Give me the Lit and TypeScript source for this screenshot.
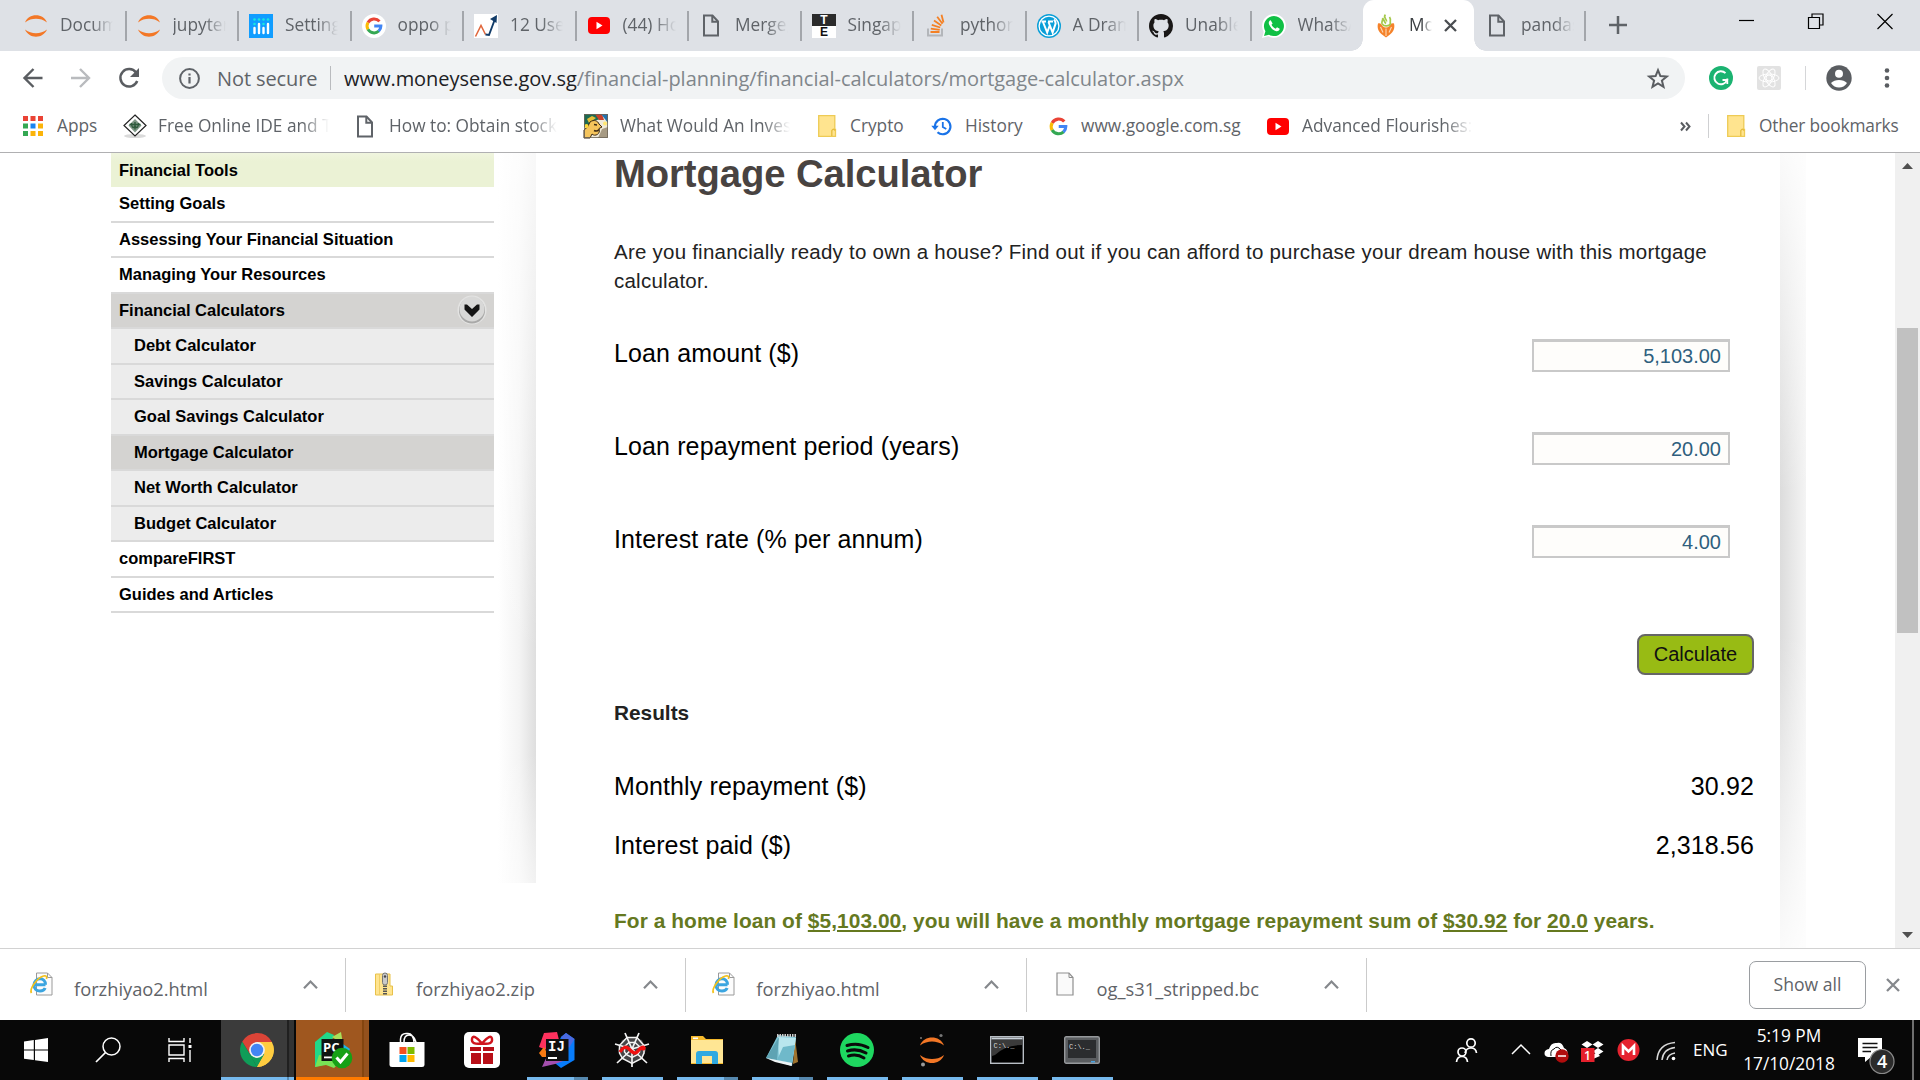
import { LitElement, html, css, svg } from "lit";
import { customElement } from "lit/decorators.js";
import { classMap } from "lit/directives/class-map.js";

const icon = (w: number, h: number, box: string, body: unknown) =>
  html`<svg class="ic" width=${w} height=${h} viewBox=${box} fill="none">${body}</svg>`;

const jupyter = () => icon(24, 24, "0 0 24 24", svg`
  <path d="M1 8.500C3 3.800 7.200 1.300 12 1.300S21 3.800 23 8.500C19.500 5.800 16 4.800 12 4.800S4.500 5.800 1 8.500Z" fill="#f37726"/>
  <path d="M1 15.500C3 20.200 7.200 22.700 12 22.700S21 20.200 23 15.500C19.500 18.200 16 19.200 12 19.200S4.500 18.200 1 15.500Z" fill="#f37726"/>`);

const plotly = () => icon(24, 24, "0 0 24 24", svg`
  <rect width="24" height="24" fill="#119dff"/>
  <g fill="#19e6e0"><circle cx="5.500" cy="5.500" r="1.300"/><circle cx="10" cy="5.500" r="1.300"/><circle cx="14.500" cy="5.500" r="1.300"/><circle cx="19" cy="5.500" r="1.300"/><circle cx="5.500" cy="10" r="1.300"/><circle cx="14.500" cy="10" r="1.300"/></g>
  <path d="M5.500 14v5M10 10v9M14.500 14v5M19 10v9" stroke="#fff" stroke-width="2.400" stroke-linecap="round"/>`);

const googleG = (s: number) => icon(s, s, "0 0 24 24", svg`
  <path d="M19.300 5.800A9.300 9.300 0 0 0 4 7.500" stroke="#ea4335" stroke-width="4"/>
  <path d="M4 7.400A9.300 9.300 0 0 0 4 16.600" stroke="#fbbc05" stroke-width="4"/>
  <path d="M4 16.500A9.300 9.300 0 0 0 18.400 18.700" stroke="#34a853" stroke-width="4"/>
  <path d="M18.200 18.900A9.300 9.300 0 0 0 21.200 12H12.300" stroke="#4285f4" stroke-width="4"/>`);

const googleTab = () => html`<span class="gtab">${googleG(18)}</span>`;

const chart = () => icon(24, 24, "0 0 24 24", svg`
  <rect width="24" height="24" fill="#fff"/>
  <path d="M1.500 22.500L7 11.500L11.500 20.500" stroke="#e0653a" stroke-width="1.500"/>
  <path d="M11.500 20.500L15 21L21 5" stroke="#123c69" stroke-width="1.900"/>
  <path d="M16 5L23 1L22.500 9Z" fill="#123c69"/>`);

const youtube = () => icon(22, 17, "0 0 22 17", svg`
  <rect width="22" height="17" rx="4" fill="#f00"/><path d="M8.500 4.800L14.500 8.500L8.500 12.200Z" fill="#fff"/>`);

const page = () => icon(18, 23, "0 0 18 23", svg`
  <path d="M2 1.500H10.500L16 7.500V21.500H2Z" stroke="#5f6368" stroke-width="2"/><path d="M10.300 1.500V7.700H16" stroke="#5f6368" stroke-width="2"/>`);

const te = () => icon(24, 24, "0 0 24 24", svg`
  <rect width="24" height="12" fill="#2b2b2b"/><rect y="12" width="24" height="12" fill="#fff"/>
  <text x="12" y="9.600" font-size="12" class="teText" fill="#fff">T</text>
  <text x="12" y="22.300" font-size="12" class="teText" fill="#111">E</text>`);

const stack = () => icon(20, 23, "0 0 20 23", svg`
  <path d="M2 14.500V21.500H16V14.500" stroke="#b3b6ba" stroke-width="2"/>
  <path d="M4.500 18H13.500M4.800 14.600L13.700 15.800M5.800 10.800L14.200 13.500M8 6.500L15.300 11.400M11.200 2.800L16.500 9.800M15.500 0.800L17.500 8.500" stroke="#f48024" stroke-width="1.800"/>`);

const wordpress = () => icon(24, 24, "0 0 24 24", svg`
  <circle cx="12" cy="12" r="12" fill="#0a9fd8"/><circle cx="12" cy="12" r="9.900" stroke="#fff" stroke-width="1.300"/>
  <path d="M4.500 7.600H9M11 7.600H16M6 8L10.200 18.500L12.700 11.500M11.500 8L15.600 18.500L18.600 9.500Q18.500 7 17 5.500" stroke="#fff" stroke-width="2"/>`);

const github = () => icon(24, 24, "0 0 16 16", svg`
  <path fill="#191717" d="M8 0C3.580 0 0 3.580 0 8c0 3.540 2.290 6.530 5.470 7.590.4.070.550-.170.550-.380 0-.190-.010-.820-.010-1.490-2.010.370-2.530-.490-2.690-.940-.090-.230-.480-.940-.820-1.130-.280-.150-.680-.520-.010-.530.630-.010 1.080.580 1.230.820.720 1.210 1.870.870 2.330.660.070-.520.280-.870.510-1.070-1.780-.2-3.640-.890-3.640-3.950 0-.870.310-1.590.820-2.150-.080-.2-.360-1.020.080-2.120 0 0 .670-.210 2.200.820.640-.180 1.320-.270 2-.270s1.360.090 2 .270c1.530-1.040 2.200-.820 2.200-.820.440 1.100.160 1.920.080 2.120.510.560.820 1.270.820 2.150 0 3.070-1.870 3.750-3.650 3.950.290.250.540.730.540 1.480 0 1.070-.010 1.930-.010 2.200 0 .210.150.460.550.380A8.010 8.010 0 0 0 16 8c0-4.420-3.580-8-8-8z"/>`);

const whatsapp = () => icon(24, 24, "0 0 24 24", svg`
  <path d="M0 24L1.700 17.900A11.900 11.900 0 1 1 6.200 22.300Z" fill="#fff"/>
  <path d="M2 22L3.400 17.300A10 10 0 1 1 7 20.800Z" fill="#10c045"/>
  <path d="M8.700 6.200C7 6.600 6.300 8.600 7.100 10.400C8.600 13.800 11 16.200 14.300 17.200C16 17.600 17.600 16.400 17.700 14.800L15 13.300L13.700 14.700C11.800 13.900 10.300 12.400 9.500 10.700L10.600 9.400Z" fill="#fff"/>`);

const moneysense = () => icon(18, 24, "0 0 18 24", svg`
  <path d="M1 9.500C3 8.500 4.500 10 5.500 12Q9 15 12.500 12C13.500 10 15 8.500 17 9.500C18.300 14.500 16 18 13 20.500L9 23.500L5 20.500C2 18 -.3 14.500 1 9.500Z" fill="#f5822a"/>
  <path d="M9 14.500V22M3.500 13L6 18.500M14.500 13L12 18.500" stroke="#fcd9b4" stroke-width="1.100"/>
  <path d="M8.500 .8C5.500 3 10 5 9.500 7.500M12.500 3C14.500 6 12.500 7.500 13.500 9.500C12.500 12.500 6.500 13 5 9.500C4.200 7 6.500 6 5.500 4C7.500 6 7 8 9 9.500" stroke="#a4c84a" stroke-width="1.700"/>`);

const gfg = () => icon(24, 24, "0 0 24 24", svg`
  <ellipse cx="12" cy="22" rx="11" ry="2" fill="#dadada"/>
  <path d="M12 1L23 11.500L12 22L1 11.500Z" fill="#fff" stroke="#222" stroke-width="1.200"/>
  <path d="M12 5L18.500 11.500L12 18.500L5.500 11.500Z" fill="#7d9685"/><path d="M6.500 10.500H17.500M12 8V15.500M8.500 9Q9 16 12 12Q15 16 15.500 9" stroke="#2d5a3c" stroke-width="1.400"/>`);

const jester = () => icon(24, 24, "0 0 24 24", svg`
  <rect width="24" height="24" fill="#efe9d8"/><path d="M0 0H12L17 5L9 7L4 13H0Z" fill="#1d6a52"/>
  <path d="M3 5L8 2L12 4L5 9Z" fill="#e5bd35"/><path d="M11 0H18L20 6L15 6Z" fill="#c8402b"/><path d="M17 0H24V9Z" fill="#2472ad"/>
  <path d="M6 8C10 5 14 7 15 10L18 13L15 14.500C17 20 11 23 8 20L6 24H0V16Q4 14 6 8Z" fill="#f5c45c" stroke="#3e2b14" stroke-width="1"/>
  <path d="M10 10.500L13 11M10 16.500Q13 18 15 15.500" stroke="#3e2b14" stroke-width="1.500"/><circle cx="2.500" cy="12" r="2" fill="#ffd934"/><circle cx="21" cy="9.500" r="2" fill="#ffe873"/><path d="M14 24L18 15L24 13V24Z" fill="#a69a83"/><rect x=".5" y=".5" width="23" height="23" stroke="#6b6456" stroke-width=".8"/>`);

const folder = () => icon(18, 22, "0 0 18 22", svg`
  <path d="M.7.700H16.800V14.500H17.500V21.300H.7Z" fill="#ffe48f" stroke="#eecb55" stroke-width="1.300"/><path d="M13.800 21V15.500Q15.500 13 17.300 15.500" stroke="#e6bd3c" stroke-width="1.300"/>`);

const history = () => icon(21, 19, "0 0 21 19", svg`
  <path d="M4 9.500A7.700 7.700 0 1 1 6.500 15.200" stroke="#1a73e8" stroke-width="2.200"/><path d="M.3 8.800H7.700L4 13.300Z" fill="#1a73e8"/><path d="M11.800 5V10L15.300 12" stroke="#1a73e8" stroke-width="1.800"/>`);

const appsGrid = () => icon(20, 20, "0 0 20 20", svg`
  <g fill="#ea4335"><rect width="5" height="5"/><rect x="7.500" width="5" height="5"/><rect x="15" width="5" height="5"/></g>
  <rect y="7.500" width="5" height="5" fill="#34a853"/><rect x="7.500" y="7.500" width="5" height="5" fill="#1a84f0"/><rect x="15" y="7.500" width="5" height="5" fill="#fbb40a"/>
  <rect y="15" width="5" height="5" fill="#34a853"/><rect x="7.500" y="15" width="5" height="5" fill="#fbb40a"/><rect x="15" y="15" width="5" height="5" fill="#fbb40a"/>`);

const ieFile = () => icon(24, 24, "0 0 24 24", svg`
  <path d="M6.500 1H17.500L22 5.500V23H6.500Z" fill="#fcfcfc" stroke="#9a9a9a"/><path d="M17.500 1V5.500H22" stroke="#9a9a9a"/>
  <path d="M15.500 12.800H5M15.500 12.800C15.500 9 13 6.800 10 6.800S4 9.300 4 13S6.500 19 10 19C12.500 19 14.300 18 15.200 16" stroke="#3ba5e0" stroke-width="3"/>
  <path d="M1.500 21C-1 17 7 6 13.500 4Q17.500 3 16.500 7" stroke="#f3c11b" stroke-width="1.700"/>`);

const zipFile = () => icon(18, 24, "0 0 18 24", svg`
  <path d="M.5 2H15V14H17.500V23H.5Z" fill="#ffe48f" stroke="#e8c14a"/><path d="M4.500 2V23" stroke="#f0cf65"/>
  <path d="M10 1V23" stroke="#555" stroke-width="4" stroke-dasharray="1.500 1"/><rect x="7.500" y="1" width="5" height="12" rx="2.400" fill="#c9c9c9" stroke="#777"/><circle cx="10" cy="4.500" r="1.200" fill="#444"/>`);

const plainFile = () => icon(18, 24, "0 0 18 24", svg`
  <path d="M1 1H13L17 5.500V23H1Z" fill="#fafafa" stroke="#8f8f8f" stroke-width="1.200"/><path d="M13 1V5.500H17" stroke="#8f8f8f"/>`);

const TABS: [() => unknown, string][] = [
  [jupyter, "Docume"], [jupyter, "jupyter-"], [plotly, "Settings"], [googleTab, "oppo ph"], [chart, "12 Usef"],
  [youtube, "(44) How"], [page, "Merge, j"], [te, "Singapo"], [stack, "python -"], [wordpress, "A Drama"],
  [github, "Unable t"], [whatsapp, "WhatsAp"], [moneysense, "Mo"], [page, "pandas."],
];

const BOOKMARKS: [string, () => unknown, string][] = [
  ["b0", appsGrid, "Apps"], ["b1", gfg, "Free Online IDE and Te"], ["b2", page, "How to: Obtain stock p"],
  ["b3", jester, "What Would An Invest"], ["b4", folder, "Crypto"], ["b5", history, "History"],
  ["b6", () => googleG(19), "www.google.com.sg"], ["b7", youtube, "Advanced Flourishes: "],
];

const MENU: [string, string][] = [
  ["Setting Goals", ""], ["Assessing Your Financial Situation", ""], ["Managing Your Resources", ""],
  ["Financial Calculators", "open"], ["Debt Calculator", "sub"], ["Savings Calculator", "sub"],
  ["Goal Savings Calculator", "sub"], ["Mortgage Calculator", "sub current"], ["Net Worth Calculator", "sub"],
  ["Budget Calculator", "sub"], ["compareFIRST", ""], ["Guides and Articles", ""],
];

const FIELDS: [string, string][] = [
  ["Loan amount ($)", "5,103.00"], ["Loan repayment period (years)", "20.00"], ["Interest rate (% per annum)", "4.00"],
];

const DOWNLOADS: [() => unknown, string][] = [
  [ieFile, "forzhiyao2.html"], [zipFile, "forzhiyao2.zip"], [ieFile, "forzhiyao.html"], [plainFile, "og_s31_stripped.bc"],
];

const windowsLogo = () => icon(24, 24, "0 0 24 24", svg`<path d="M0 3.400L9.800 2V11.500H0ZM11 1.900L24 0V11.500H11ZM0 12.600H9.800V22L0 20.700ZM11 12.600H24V24L11 22.200Z" fill="#fff"/>`);
const search = () => icon(26, 26, "0 0 26 26", svg`<circle cx="16.500" cy="9.500" r="8.500" stroke="#fff" stroke-width="1.500"/><path d="M10.500 15.500L1 25" stroke="#fff" stroke-width="1.700"/>`);
const taskView = () => icon(25, 24, "0 0 25 24", svg`<path d="M1 0V3.500H16V0M1 24V20.500H16V24M1 7H16V17H1ZM22 0V5M22 12V24" stroke="#fff" stroke-width="1.400"/><rect x="20.500" y="7" width="3" height="3" fill="#fff"/>`);
const chrome = () => icon(34, 34, "0 0 34 34", svg`
  <path d="M2.300 8.500L9.800 21L17 34A17 17 0 0 1 2.300 8.500Z" fill="#0f9d58"/><path d="M17 34A17 17 0 0 0 31.900 9H17V17L24.400 21Z" fill="#ffcd40"/>
  <path d="M9.600 21.200L24.400 21L17 34Z" fill="#0f9d58"/><path d="M24.400 21L17 34H18A17 17 0 0 0 33 12L26 14Z" fill="#ffcd40"/>
  <path d="M2.300 8.500A17 17 0 0 1 31.900 9H17L10 14V21Z" fill="#db4437"/>
  <circle cx="17" cy="17" r="7.900" fill="#f1f1f1"/><circle cx="17" cy="17" r="6.200" fill="#4285f4"/>`);
const pycharm = () => icon(38, 38, "0 0 38 38", svg`
  <path d="M1 11L13 1L20 4L9 34L1 36Z" fill="#21d789"/><path d="M18 6L27 1L29 13Z" fill="#a8e05a"/><path d="M26 11L36 18L30 30L22 24Z" fill="#1cb8e8"/><path d="M1 36L5 24L30 27L20 37L12 34Z" fill="#78e355"/>
  <rect x="7.500" y="8" width="22" height="22" fill="#0f1412"/><text x="9" y="20.500" class="logoText" font-size="13">PC</text><rect x="10" y="25.500" width="8" height="1.800" fill="#fff"/>
  <circle cx="28" cy="27" r="10.300" fill="#16a016"/><path d="M22.500 26.500L26.500 31L33.500 22.500" stroke="#fff" stroke-width="3"/>`);
const store = () => icon(36, 36, "0 0 36 36", svg`
  <path d="M11.500 10V7Q12 1.500 17 1.500H19Q24 1.500 25 10M15 10Q15 3 20 3T27 10" stroke="#fff" stroke-width="1.500"/><path d="M.5 10H35.500V33Q35.500 35 33 35H3Q.5 35 .5 33Z" fill="#fff"/>
  <rect x="10.500" y="15" width="7" height="7" fill="#f25022"/><rect x="18.500" y="15" width="7" height="7" fill="#7fba00"/><rect x="10.500" y="23" width="7" height="7" fill="#00a4ef"/><rect x="18.500" y="23" width="7" height="7" fill="#ffb900"/>`);
const gift = () => icon(36, 36, "0 0 36 36", svg`
  <rect width="36" height="36" rx="5" fill="#fff"/><path d="M6 15H17V19H6ZM19 15H30V19H19ZM7 21H17V32H7ZM19 21H29V32H19Z" fill="#b80f18"/>
  <path d="M18 11.500Q9 1 8 7T18 11.500Q27 1 28 7T18 11.500" stroke="#d0141d" stroke-width="2.400"/>`);
const intellij = () => icon(36, 36, "0 0 36 36", svg`
  <path d="M5 1L18 0L20 8L8 18L0 15Z" fill="#fe315d"/><path d="M0 21L5 15L10 25L3 25Z" fill="#f97a12"/><path d="M22 5L27 1L35.500 7V28L22 36L12 28Z" fill="#087cfa"/><path d="M22 5L27 1L35.500 7L30 16Z" fill="#4b6ae0"/><path d="M3 35L8 24L24 29L16 32Z" fill="#a44fae"/>
  <rect x="7" y="7" width="22.500" height="22" fill="#0f0f10"/><text x="9" y="19" class="logoText mono" font-size="14">IJ</text><rect x="9" y="25" width="9" height="2" fill="#fff"/>`);
const spider = () => icon(36, 36, "0 0 36 36", svg`
  <path d="M18 5L28 8L32 18L28 27L18 31L8 27L4 18L8 8Z" fill="#454547"/>
  <path d="M18 17V35M18 17L11 1M18 17L25 1M18 17L1 12M18 17L35 12M18 17L3 31M18 17L33 31" stroke="#f4f4f4" stroke-width="1.700"/>
  <path d="M13 5.500L23 5.500L30 13.500V21L27.500 26.500L18 31.500L8.500 26.500L5.500 21V13.500ZM15 10.500H21L25.500 14.500V20L23 23L18 25.500L13 23L10.500 20V14.500Z" stroke="#f4f4f4" stroke-width="1.500"/>
  <path d="M6 20C9 15 12 14 15 17S21 23 24 19S28 15 31 17" stroke="#f01010" stroke-width="3.400"/><circle cx="29" cy="16" r="2.500" fill="#f01010"/>`);
const explorer = () => icon(34, 30, "0 0 34 30", svg`
  <path d="M1 1H13L16 4H33V29H1Z" fill="#f5b92c"/><path d="M1 5H33V28H1Z" fill="#ffe694"/><path d="M6 29V19Q6 16 9 16H25Q28 16 28 19V29H22V21H12V29Z" fill="#2fa9e0"/><rect x="3" y="2.500" width="5" height="1.600" fill="#fff"/>`);
const notepad = () => icon(34, 34, "0 0 34 34", svg`
  <path d="M30 4L33 29L28 31Z" fill="#a0742f"/><path d="M13 2L31 4L27 33L1 25Z" fill="#7fc6d6"/><path d="M13 4L31 5L27 30L14 27Z" fill="#b9e6ee"/><path d="M18 14L30 12L27 30L12 27Z" fill="#6fb9ca"/><path d="M1 25L14 4L12 27Z" fill="#5ea3b3"/><path d="M1 25L27 30L26.500 33L10 29Z" fill="#eef4f5"/><path d="M12 2.500H32" stroke="#ccc" stroke-width="3" stroke-dasharray="1.500 1"/>`);
const spotify = () => icon(34, 34, "0 0 34 34", svg`
  <circle cx="17" cy="17" r="17" fill="#1ed760"/><path d="M7 12.500Q18 9 28 14.500M7.500 18Q17 15 26 20M8.500 23Q17 20.500 24 25" stroke="#0a0a0a" stroke-width="3" stroke-linecap="round"/>`);
const jupyterBig = () => icon(26, 34, "0 0 26 34", svg`
  <path d="M1 12.500C3 7 8 4.500 13 4.500S23 7 25 12.500C21 9.500 17 8.500 13 8.500S5 9.500 1 12.500ZM1 22C3 27.500 8 30 13 30S23 27.500 25 22C21 25 17 26 13 26S5 25 1 22Z" fill="#f37726"/><circle cx="22" cy="2.500" r="1.600" fill="#777"/><circle cx="4" cy="31.500" r="2" fill="#999"/><circle cx="2" cy="5" r="1" fill="#777"/>`);
const cmd = () => icon(34, 28, "0 0 34 28", svg`
  <rect x=".7" y=".7" width="32.600" height="26.600" fill="#000" stroke="#b9bfc6" stroke-width="1.400"/><path d="M1.500 2.500H32.500" stroke="#c8d0d8" stroke-width="2"/><path d="M2 4H32V9Q15 9 5 19L2 20Z" fill="#3a3a3a"/><text x="3.500" y="11.500" class="prompt" font-size="7">C:\\._</text>`);
const term = () => icon(36, 28, "0 0 36 28", svg`
  <rect x=".7" y=".7" width="34.600" height="26.600" rx="1.500" fill="#5a5d60" stroke="#96999c" stroke-width="1.400"/><rect x="4" y="4" width="28" height="18" fill="#2b2d2f"/><text x="5" y="12.500" class="prompt" font-size="7">C:\\._</text><rect x="27" y="25" width="4" height="1.500" fill="#4aa3e0"/>`);

const TASKS: [string, () => unknown][] = [
  ["", windowsLogo], ["", search], ["view3", taskView], ["active multi", chrome], ["alert multi", pycharm], ["", store], ["", gift],
  ["run multi", intellij], ["run", spider], ["run multi", explorer], ["run multi", notepad], ["run", spotify],
  ["run", jupyterBig], ["run", cmd], ["run", term],
];

@customElement("app-root")
export class AppRoot extends LitElement {
  static styles = css`
    :host { display: flex; flex-direction: column; width: 1920px; height: 1080px; overflow: hidden; background: #fff;
      font-family: "Open Sans", "Noto Sans", sans-serif; color: #5f6368; }
    * { box-sizing: border-box; }
    .ic { display: block; flex: none; overflow: visible; }
    .teText { font-family: "Liberation Sans", sans-serif; font-weight: 700; text-anchor: middle; }
    .logoText { font-family: "Open Sans", sans-serif; font-weight: 700; fill: #fff; }
    .logoText.mono { font-family: "Liberation Mono", monospace; }
    .prompt { font-family: "Liberation Mono", monospace; fill: #d8d8d8; }

    .tabs { height: 51px; flex: none; background: #dee1e6; display: flex; padding-left: 13px; }
    .tab { width: 112.500px; height: 51px; flex: none; display: flex; align-items: center; padding-left: 11px; position: relative; }
    .tab::after { content: ""; position: absolute; right: -1px; top: 11px; width: 2px; height: 30px; background: #a3a6ab; }
    .tab.noline::after { display: none; }
    .tab.active { width: 111px; background: #fff; border-radius: 11px 11px 0 0; }
    .tab.active::before { content: ""; position: absolute; left: -12px; right: -12px; bottom: 0; height: 12px;
      background: radial-gradient(circle at 0 0, transparent 11.500px, #fff 12px) left / 12px 12px no-repeat,
        radial-gradient(circle at 100% 0, transparent 11.500px, #fff 12px) right / 12px 12px no-repeat; }
    .tab.last { width: 111px; }
    .fav { width: 24px; height: 24px; display: flex; align-items: center; justify-content: center; flex: none; }
    .gtab { width: 24px; height: 24px; border-radius: 50%; background: #fff; display: flex; align-items: center; justify-content: center; }
    .tabText { margin-left: 12px; width: 53px; font-size: 17.300px; line-height: 24px; white-space: nowrap; overflow: hidden; position: relative; top: -.5px;
      -webkit-mask-image: linear-gradient(90deg, #000 60%, transparent); mask-image: linear-gradient(90deg, #000 60%, transparent); }
    .active .tabText { width: 23px; color: #3c4043; margin-left: 11px;
      -webkit-mask-image: linear-gradient(90deg, #000 55%, transparent); mask-image: linear-gradient(90deg, #000 55%, transparent); }
    .tabClose { margin-left: 12px; }
    .newTab { margin: 16px 0 0 24px; }
    .winBtns { margin-left: auto; display: flex; gap: 53px; padding: 13px 27px 0 0; }

    .toolbar { height: 54px; flex: none; display: flex; align-items: center; padding-left: 22px; }
    .omni { width: 1523px; height: 42px; border-radius: 21px; background: #f1f3f4; display: flex; align-items: center; padding: 0 16px 0 17px; font-size: 20px; white-space: nowrap; }
    .nav { width: 140px; display: flex; gap: 27px; flex: none; }
    .notSecure { margin-left: 17px; width: 113px; color: #5f6368; letter-spacing: -.1px; }
    .vline { width: 1px; height: 24px; background: #b9bbbe; flex: none; }
    .url { margin-left: 13px; color: #80868b; flex: 1; letter-spacing: -.03px; }
    .url b { font-weight: 400; color: #202124; }
    .ext { display: flex; align-items: center; margin-left: 24px; flex: 1; }
    .ext .react { margin-left: 24px; } .ext .vline { margin-left: 24px; background: #d5d6d8; } .ext .who { margin-left: 20px; } .ext .dots { margin-left: 33px; }

    .bookmarks { height: 48px; flex: none; display: flex; align-items: center; padding: 0 0 5px 23px; border-bottom: 1px solid #b0b0b2; font-size: 17.300px; white-space: nowrap; }
    .bm { display: flex; align-items: center; flex: none; }
    .bmText { overflow: hidden; line-height: 26px; }
    .b0 { width: 100px; } .b1 { width: 233px; } .b2 { width: 228px; } .b3 { width: 234px; } .b4 { width: 113px; } .b5 { width: 118px; } .b6 { width: 218px; } .b7 { width: 413px; }
    .b0 .bmText { margin-left: 14px; } .b1 .bmText { margin-left: 11px; width: 171px; } .b2 .bmText { margin-left: 15px; width: 168px; } .b3 .bmText { margin-left: 12px; width: 170px; }
    .b4 .bmText { margin-left: 14px; } .b5 .bmText { margin-left: 13px; } .b6 .bmText { margin-left: 13px; } .b7 .bmText { margin-left: 13px; width: 170px; }
    .b1 .bmText, .b2 .bmText, .b3 .bmText, .b7 .bmText { -webkit-mask-image: linear-gradient(90deg, #000 84%, transparent); mask-image: linear-gradient(90deg, #000 84%, transparent); }
    .bookmarks .vline { margin: 0 18px 0 17px; background: #cfd0d2; }
    .other .bmText { margin-left: 14px; letter-spacing: -.15px; }

    .view { height: 796px; flex: none; display: flex; border-bottom: 1px solid #d2d2d2; font-family: "Liberation Sans", Arial, sans-serif; color: #000; overflow: hidden; }
    .side { width: 383px; margin-left: 111px; flex: none; font-weight: 700; font-size: 16.500px; }
    .heading { height: 34px; line-height: 34px; padding-left: 8px; background: linear-gradient(#f0f5df, #ebf2d5 8px); }
    .item { height: 35.500px; line-height: 33px; border-bottom: 2px solid #d9d9d9; padding-left: 8px; display: flex; justify-content: space-between; }
    .item.sub { padding-left: 23px; background: #ececec; }
    .item.open, .item.current { background: #d4d3d1; }
    .knob { margin: 1px 7px 0 0; }
    .shadeL { width: 42px; height: 730px; flex: none; background: linear-gradient(#fffc, #fff0 500px, #fff0 600px, #fff9), linear-gradient(90deg, #fff 10%, #f4f4f4 60%, #dedede); }
    .main { width: 1244px; flex: none; padding-left: 78px; }
    h1 { margin: 1px 0 0; font-size: 38.200px; line-height: 40px; color: #484341; letter-spacing: -.05px; }
    .intro { margin: 43px 0 0; font-size: 20.500px; letter-spacing: .23px; line-height: 29px; color: #222; width: 1120px; }
    .fields { margin-top: 44px; display: flex; flex-direction: column; gap: 60px; }
    .field { display: flex; justify-content: space-between; height: 33px; width: 1116px; font-size: 25px; letter-spacing: .12px; line-height: 28px; }
    .box { width: 198px; height: 33px; border: 2px solid #c9c9c9; border-top-width: 3px; background: #fefdfb; color: #2f5f7e; font-size: 20px; letter-spacing: 0; line-height: 29px; text-align: right; padding-right: 7px; }
    .calc { display: block; margin: 76px 0 0 1023px; width: 117px; height: 41px; border: 2px solid #666; border-radius: 8px; background: #98bb14; font: 20px/35px "Liberation Sans", Arial, sans-serif; color: #111; padding: 0; }
    .results { margin: 24px 0 44px; font-size: 20.800px; line-height: 28px; font-weight: 700; color: #222; }
    .row { display: flex; justify-content: space-between; width: 1140px; font-size: 25px; letter-spacing: .12px; line-height: 30px; margin-bottom: 29px; }
    .sum { margin-top: 47px; font-size: 20.900px; letter-spacing: .06px; line-height: 28px; font-weight: 700; color: #65791f; white-space: nowrap; }
    .shadeR { width: 26px; flex: none; background: linear-gradient(#fffd, #fff0 340px, #fff0 480px, #fffd), linear-gradient(90deg, #dcdcdc, #f4f4f4); }
    .scroll { margin-left: auto; width: 25px; background: #f0f0f0; display: flex; flex-direction: column; align-items: center; padding: 10px 0; }
    .thumb { width: 21px; height: 305px; background: #c1c1c1; margin: 159px 0 auto; }

    .downloads { height: 71px; flex: none; display: flex; align-items: center; }
    .dl { width: 340.300px; height: 54px; border-right: 1.500px solid #cbcbcb; display: flex; align-items: center; padding: 0 27px 0 26px; font-size: 18.300px; }
    .dl:first-child { width: 346px; padding-left: 30px; }
    .dl .dIcon { width: 24px; display: flex; justify-content: center; position: relative; top: -1px; }
    .dl .name { margin-left: 20px; flex: 1; position: relative; top: 4px; }
    .showAll { margin-left: auto; width: 117px; height: 48px; border: 1px solid #9a9da1; border-radius: 7px; font-size: 17.600px; font-weight: 500; line-height: 44px; text-align: center; color: #5f6368; }
    .dlClose { margin: 0 20px 0 20px; }

    .taskbar { height: 60px; flex: none; background: #080808; display: flex; color: #fff; }
    .task { width: 75px; display: flex; align-items: center; justify-content: center; position: relative; flex: none; }
    .task:nth-child(-n+2) { width: 72px; }
    .task.view3 { width: 77px; padding-right: 4px; }
    .task.active, .task.alert { width: 73px; }
    .task.active { margin-right: 2px; padding-right: 2px; background: linear-gradient(90deg, #3b3b3b 66px, #202020 66px, #202020 68px, #333 68px); }
    .task.alert { background: linear-gradient(90deg, #9f571f 66px, #84450f 66px, #84450f 68px, #94511d 68px); }
    .task.run::after, .task.active::after, .task.alert::after { content: ""; position: absolute; bottom: 0; left: 8px; right: 6px; height: 3px; background: #76b9ed; }
    .task.run.multi::after { background: linear-gradient(90deg, #76b9ed 47px, #5688ae 47px); }
    .task.active::after { left: 0; right: 0; background: linear-gradient(90deg, #76b9ed 66px, #5688ae 66px, #5688ae 68px, #76b9ed 68px); }
    .task.alert::after { left: 0; right: 0; background: #ff7b00; }
    .tray { margin-left: auto; display: flex; align-items: center; font-size: 17.300px; line-height: 28px; }
    .eng { margin-left: 25px; font-size: 17px; width: 36px; }
    .clock { margin: 0 18px 0 10px; width: 100px; text-align: center; }
    .peek { width: 2px; height: 60px; background: #6f6f6f; margin: 0 6px 0 17px; }
    .badge { font-family: "Open Sans", sans-serif; font-weight: 600; fill: #fff; }
  `;

  private tab = ([fav, text]: [() => unknown, string], i: number) => html`
    <div class=${classMap({ tab: true, active: i === 12, noline: i === 11 || i === 12, last: i === 13 })}>
      <span class="fav">${fav()}</span><span class="tabText">${text}</span>
      ${i === 12 ? html`<svg class="ic tabClose" width="13" height="13" viewBox="0 0 13 13"><path d="M1 1L12 12M12 1L1 12" stroke="#4a4d51" stroke-width="2.300"/></svg>` : ""}
    </div>`;

  private task = ([cls, ic]: [string, () => unknown]) => html`<div class="task ${cls}">${ic()}</div>`;

  render() {
    return html`
      <div class="tabs">
        ${TABS.map(this.tab)}
        <svg class="ic newTab" width="18" height="18" viewBox="0 0 18 18"><path d="M9 0V18M0 9H18" stroke="#5f6368" stroke-width="2.500"/></svg>
        <div class="winBtns">
          ${icon(16, 16, "0 0 16 16", svg`<path d="M0 7.500H15" stroke="#000" stroke-width="1.200"/>`)}
          ${icon(16, 16, "0 0 16 16", svg`<path d="M.5 4.500H11.500V15.500H.5ZM4 4V1H15V12H12" stroke="#000" stroke-width="1.200"/>`)}
          ${icon(16, 16, "0 0 16 16", svg`<path d="M.5 1L15.500 16M15.500 1L.5 16" stroke="#000" stroke-width="1.200"/>`)}
        </div>
      </div>
      <div class="toolbar">
        <div class="nav">
          ${icon(21, 20, "0 0 21 20", svg`<path d="M20.500 10H2.500M11.500 1L2.500 10L11.500 19" stroke="#5a5d61" stroke-width="2.400"/>`)}
          ${icon(21, 20, "0 0 21 20", svg`<path d="M1 10H19M10 1L19 10L10 19" stroke="#b9bbbe" stroke-width="2.400"/>`)}
          ${icon(22, 20, "0 0 22 20", svg`<path d="M18 4.500A8.700 8.700 0 1 0 19.200 13" stroke="#5a5d61" stroke-width="2.500"/><path d="M21 0V9H12Z" fill="#5a5d61"/>`)}
        </div>
        <div class="omni">
          ${icon(21, 21, "0 0 21 21", svg`<circle cx="10.500" cy="10.500" r="9.400" stroke="#5f6368" stroke-width="2"/><path d="M10.500 9V15.500M10.500 5.500V7.600" stroke="#5f6368" stroke-width="2.200"/>`)}
          <span class="notSecure">Not secure</span><span class="vline"></span>
          <span class="url"><b>www.moneysense.gov.sg</b>/financial-planning/financial-calculators/mortgage-calculator.aspx</span>
          ${icon(22, 21, "0 0 22 21", svg`<path d="M11 2.200L13.400 8.100L19.800 8.500L14.900 12.600L16.500 18.800L11 15.400L5.500 18.800L7.100 12.600L2.200 8.500L8.600 8.100Z" stroke="#5a5d61" stroke-width="2"/>`)}
        </div>
        <div class="ext">
          ${icon(24, 24, "0 0 24 24", svg`<circle cx="12" cy="12" r="12" fill="#1bb371"/><path d="M16.500 7.200A6.500 6.500 0 1 0 18 14H13.500" stroke="#fff" stroke-width="1.900"/><path d="M18.300 12.500V18" stroke="#fff" stroke-width="1.800"/>`)}
          <span class="react">${icon(24, 24, "0 0 24 24", svg`<rect width="24" height="24" rx="2" fill="#e2e2e2"/><g stroke="#fff"><ellipse cx="12" cy="12" rx="10" ry="4"/><ellipse cx="12" cy="12" rx="10" ry="4" transform="rotate(60 12 12)"/><ellipse cx="12" cy="12" rx="10" ry="4" transform="rotate(120 12 12)"/><circle cx="12" cy="12" r="3"/></g>`)}</span>
          <span class="vline"></span>
          <span class="who">${icon(26, 26, "0 0 26 26", svg`<circle cx="13" cy="13" r="12.700" fill="#5a5d61"/><circle cx="13" cy="8.700" r="4" fill="#fff"/><path d="M5 18Q8 15 13 15T21 18Q18 22.500 13 22.500T5 18Z" fill="#fff"/>`)}</span>
          <span class="dots">${icon(5, 20, "0 0 5 20", svg`<g fill="#5a5d61"><circle cx="2" cy="2.500" r="2.300"/><circle cx="2" cy="10" r="2.300"/><circle cx="2" cy="17.500" r="2.300"/></g>`)}</span>
        </div>
      </div>
      <div class="bookmarks">
        ${BOOKMARKS.map(([c, ic, t]) => html`<div class="bm ${c}">${ic()}<span class="bmText">${t}</span></div>`)}
        ${icon(11, 9, "0 0 11 9", svg`<path d="M1 .5L4.500 4.500L1 8.500M6 .5L9.500 4.500L6 8.500" stroke="#5a5d61" stroke-width="2"/>`)}
        <span class="vline"></span>
        <div class="bm other">${folder()}<span class="bmText">Other bookmarks</span></div>
      </div>
      <div class="view">
        <div class="side">
          <div class="heading">Financial Tools</div>
          ${MENU.map(([t, c]) => html`<div class="item ${c}"><span>${t}</span>${c === "open" ? html`<svg class="ic knob" width="30" height="31" viewBox="0 0 30 31" fill="none"><circle cx="15" cy="15" r="14.500" fill="#e3e3e2"/><circle cx="15" cy="15.500" r="13" fill="#a9a9a8"/><circle cx="15" cy="14" r="12.500" fill="#d8d8d7"/><path d="M7.500 9.500L10 9.500L15 14L20 9.500L22.500 9.500V14.500L15 22L7.500 14.500Z" fill="#141414"/></svg>` : ""}</div>`)}
        </div>
        <div class="shadeL"></div>
        <div class="main">
          <h1>Mortgage Calculator</h1>
          <p class="intro">Are you financially ready to own a house? Find out if you can afford to purchase your dream house with this mortgage calculator.</p>
          <div class="fields">${FIELDS.map(([l, v]) => html`<div class="field"><span>${l}</span><div class="box">${v}</div></div>`)}</div>
          <button class="calc">Calculate</button>
          <div class="results">Results</div>
          <div class="row"><span>Monthly repayment ($)</span><span>30.92</span></div>
          <div class="row"><span>Interest paid ($)</span><span>2,318.56</span></div>
          <div class="sum">For a home loan of <u>$5,103.00</u>, you will have a monthly mortgage repayment sum of <u>$30.92</u> for <u>20.0</u> years.</div>
        </div>
        <div class="shadeR"></div>
        <div class="scroll">
          ${icon(11, 6, "0 0 11 6", svg`<path d="M0 6L5.500 0L11 6Z" fill="#505050"/>`)}
          <div class="thumb"></div>
          ${icon(11, 6, "0 0 11 6", svg`<path d="M0 0L5.500 6L11 0Z" fill="#505050"/>`)}
        </div>
      </div>
      <div class="downloads">
        ${DOWNLOADS.map(([ic, n]) => html`<div class="dl"><span class="dIcon">${ic()}</span><span class="name">${n}</span>${icon(15, 9, "0 0 15 9", svg`<path d="M1 8.300L7.500 1.500L14 8.300" stroke="#85888c" stroke-width="2.200"/>`)}</div>`)}
        <div class="showAll">Show all</div>
        <div class="dlClose">${icon(14, 14, "0 0 14 14", svg`<path d="M1 1L13 13M13 1L1 13" stroke="#85888c" stroke-width="2.300"/>`)}</div>
      </div>
      <div class="taskbar">
        ${TASKS.map(this.task)}
        <div class="tray">
          ${icon(212, 60, "0 0 212 60", svg`
            <g stroke="#fff" stroke-width="1.700"><circle cx="15" cy="23" r="4.200"/><path d="M9 33Q10 28 15 28T20.500 33"/><circle cx="6" cy="32" r="4"/><path d="M.5 42Q1 36.500 6 36.500T11.500 42"/></g>
            <path d="M56 34L65 25L74 34" stroke="#fff" stroke-width="1.500"/>
            <path d="M92 37Q87 36 89 31Q91 29 93 29Q95 22 101 23Q106 22 108 28Q113 30 111 37Z" fill="#fff"/><path d="M95 36Q94 30 98 29Q101 25 105 30" stroke="#080808"/><circle cx="106" cy="36" r="6.700" fill="#b00d0d"/><path d="M102 36H110" stroke="#fff" stroke-width="1.500"/>
            <path d="M131 21L136.500 24.500L131 28L125.500 24.500ZM142 21L147.500 24.500L142 28L136.500 24.500ZM142 28L147.500 31.500L142 35L136.500 31.500ZM136 35L141 32.500L144 36L137 39Z" fill="#fff"/><rect x="125" y="28" width="13.500" height="14" fill="#e5202c"/><text x="128" y="39.500" font-size="12" class="badge">1</text>
            <circle cx="172.500" cy="30" r="11" fill="#e5232f"/><path d="M167 35V26L172.500 31.500L178 26V35" stroke="#fff" stroke-width="2.600"/>
            <g stroke="#d8d8d8" stroke-width="1.500"><path d="M201 40Q202 24 219 22.500"/><path d="M206 40Q207 29 219 27.500"/><path d="M211 40Q212 34 219 33"/></g><circle cx="217.500" cy="38.500" r="1.800" fill="#fff"/>`)}
          <span class="eng">ENG</span>
          <div class="clock">5:19 PM<br />17/10/2018</div>
          <svg class="ic" width="38" height="60" viewBox="0 0 38 60"><path d="M1 18H25V37H14L8 42V37H1Z" fill="#fff"/><path d="M5.500 23.500H20.500M5.500 27.500H20.500M5.500 31.500H14" stroke="#111" stroke-width="1.400"/><circle cx="25" cy="41.500" r="12" fill="#2b2b2b" stroke="#8a8a8a" stroke-width="1.200"/><text x="20" y="48" font-size="18" class="badge">4</text></svg>
          <div class="peek"></div>
        </div>
      </div>`;
  }
}
